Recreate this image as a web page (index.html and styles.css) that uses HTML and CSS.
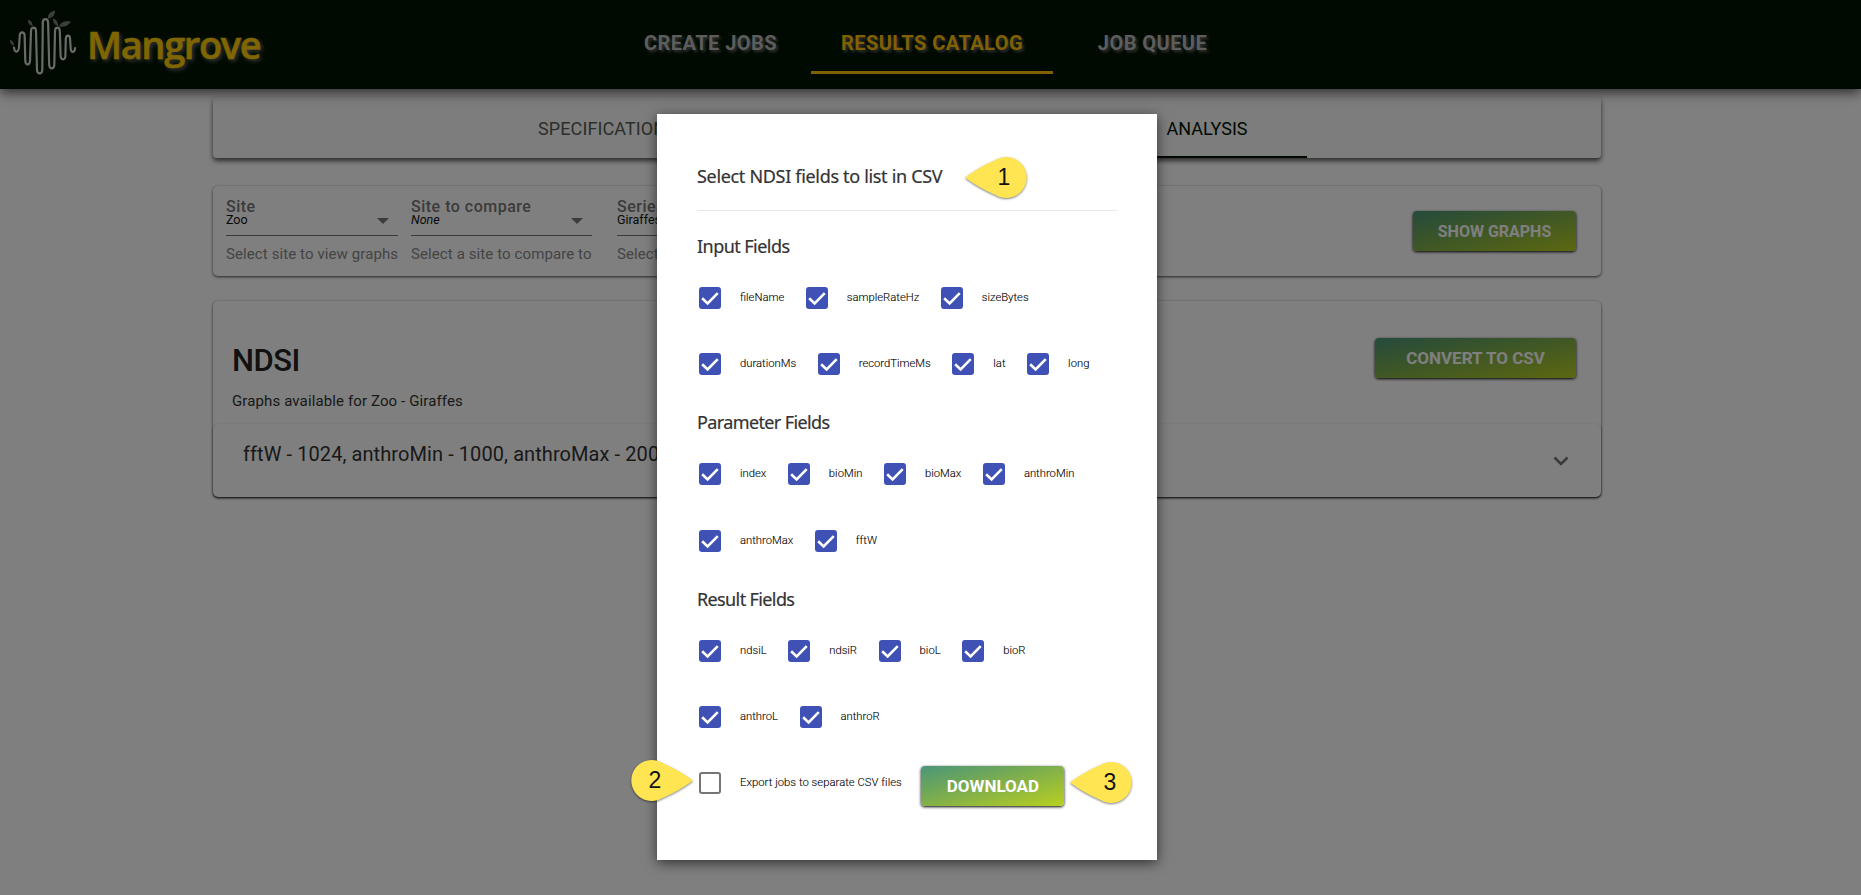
FILE: index.html
```html
<!DOCTYPE html>
<html lang="en">
<head>
<meta charset="utf-8">
<title>Mangrove</title>
<link rel="stylesheet" href="styles.css">
</head>
<body>
<svg width="0" height="0" class="defs"><defs>
  <symbol id="check" viewBox="0 0 23 23"><path d="M3.300 11.800 9 17.200 19.600 6.400" fill="none" stroke="#fff" stroke-width="2.700"/></symbol>
</defs></svg>
<div class="page">
  <header class="header">
    <div class="brand">
      <svg class="logo" viewBox="0 0 80 76">
        <path class="wave" d="M10 43.500C10.500 49 14.500 49 15 43L15.800 31C16.200 27.500 20.200 27.500 20.600 31L21.300 57C21.600 61.500 25.700 61.500 26 57L27 27C27.300 22.500 31.700 22.500 32 27L33 66C33.300 70.500 38 70.500 38.300 66L38.800 18.500C39.100 14 43.800 14 44.100 18.500L45.200 61C45.500 65.500 50 65.500 50.300 61L51 27C51.300 22.500 55.500 22.500 55.800 27L56.600 52C57 56.500 61 56.500 61.400 52L61.800 35C62.100 30.500 65.800 30.500 66.100 35L66.700 45C67 49 71 49 71 44"/>
        <g class="leaves"><path d="M44 14.500C43.500 10 46 8 51 6.500 51 11.500 48.500 14 44 14.500Z"/><path d="M28.500 22C25 21 24 19.500 24 15.500 27.500 17 28.500 18.500 28.500 22Z"/><path d="M54 22C50 20.500 49 18.500 49 14.500 53 16 54 18.500 54 22Z"/><path d="M55 22.500C57 17.500 61 16.500 67 17.500 64 22 60.500 23.500 55 22.500Z"/><path d="M10 41.800C7 41 6 39 6 35.800 9 37 10 39 10 41.800Z"/></g>
      </svg>
      <span class="brand-name">Mangrove</span>
    </div>
    <nav class="nav">
      <a class="nav-item create">CREATE JOBS</a>
      <a class="nav-item active">RESULTS CATALOG</a>
      <a class="nav-item queue">JOB QUEUE</a>
    </nav>
  </header>
  <main class="content">
    <section class="tabs">
      <a class="tab">SPECIFICATIONS</a>
      <a class="tab current">ANALYSIS</a>
    </section>
    <section class="filters card">
      <div class="field site"><label>Site</label><div class="value">Zoo<i class="arrow"></i></div><small>Select site to view graphs</small></div>
      <div class="field compare"><label>Site to compare</label><div class="value"><em>None</em><i class="arrow"></i></div><small>Select a site to compare to</small></div>
      <div class="field series"><label>Series</label><div class="value">Giraffes<i class="arrow"></i></div><small>Select series</small></div>
      <button class="btn show">SHOW GRAPHS</button>
    </section>
    <section class="card results">
      <div class="results-head">
        <div><h1>NDSI</h1><p>Graphs available for Zoo - Giraffes</p></div>
        <button class="btn convert">CONVERT TO CSV</button>
      </div>
      <div class="panel"><span>fftW - 1024, anthroMin - 1000, anthroMax - 2000</span>
        <svg class="chevron" viewBox="0 0 16 11"><path d="M1.500 1.500 8 8l6.500-6.500" fill="none" stroke="#757575" stroke-width="2.600"/></svg>
      </div>
    </section>
  </main>
</div>
<div class="overlay">
  <div class="modal">
    <h2 class="title">Select NDSI fields to list in CSV</h2>
    <h3 class="first">Input Fields</h3>
    <div class="row"><label><svg class="box"><use href="#check"/></svg><span>fileName</span></label><label><svg class="box"><use href="#check"/></svg><span>sampleRateHz</span></label><label><svg class="box"><use href="#check"/></svg><span>sizeBytes</span></label></div>
    <div class="row"><label><svg class="box"><use href="#check"/></svg><span>durationMs</span></label><label><svg class="box"><use href="#check"/></svg><span>recordTimeMs</span></label><label><svg class="box"><use href="#check"/></svg><span>lat</span></label><label><svg class="box"><use href="#check"/></svg><span>long</span></label></div>
    <h3>Parameter Fields</h3>
    <div class="row"><label><svg class="box"><use href="#check"/></svg><span>index</span></label><label><svg class="box"><use href="#check"/></svg><span>bioMin</span></label><label><svg class="box"><use href="#check"/></svg><span>bioMax</span></label><label><svg class="box"><use href="#check"/></svg><span>anthroMin</span></label></div>
    <div class="row second"><label><svg class="box"><use href="#check"/></svg><span>anthroMax</span></label><label><svg class="box"><use href="#check"/></svg><span>fftW</span></label></div>
    <h3>Result Fields</h3>
    <div class="row"><label><svg class="box"><use href="#check"/></svg><span>ndsiL</span></label><label><svg class="box"><use href="#check"/></svg><span>ndsiR</span></label><label><svg class="box"><use href="#check"/></svg><span>bioL</span></label><label><svg class="box"><use href="#check"/></svg><span>bioR</span></label></div>
    <div class="row"><label><svg class="box"><use href="#check"/></svg><span>anthroL</span></label><label><svg class="box"><use href="#check"/></svg><span>anthroR</span></label></div>
    <div class="row export"><label><svg class="box empty"></svg><span>Export jobs to separate CSV files</span></label><button class="btn download">DOWNLOAD</button></div>
  </div>
</div>
<div class="pin pin-1"><svg viewBox="0 0 62 41"><path d="M0 20.500Q14 10 31 2.700A20.500 20.500 0 1 1 31 38.300Q14 31 0 20.500Z" fill="#ffe552"/></svg><b>1</b></div>
<div class="pin pin-2"><svg viewBox="0 0 62 41"><path d="M62 20.500Q48 10 31 2.700A20.500 20.500 0 1 0 31 38.300Q48 31 62 20.500Z" fill="#ffe552"/></svg><b>2</b></div>
<div class="pin pin-3"><svg viewBox="0 0 62 41"><path d="M0 20.500Q14 10 31 2.700A20.500 20.500 0 1 1 31 38.300Q14 31 0 20.500Z" fill="#ffe552"/></svg><b>3</b></div>
</body>
</html>
```
FILE: styles.css
```css
* { box-sizing: border-box; }
body { margin: 0; font-family: Roboto, sans-serif; overflow: hidden; }
.defs { position: absolute; }
.page { height: 895px; background: #fff; }
.header { position: relative; z-index: 1; display: flex; height: 89px; background: #001400; box-shadow: 0 3px 12px rgba(0,0,0,.7); }
.brand { display: flex; width: 610px; }
.logo { width: 80px; height: 76px; margin: 4px 0 0 4px; }
.wave { fill: none; stroke: #d4d4d4; stroke-width: 2.2; stroke-linecap: round; }
.leaves { fill: #767f76; }
.brand-name { margin-left: 3px; font: 600 38px/88px "Open Sans", sans-serif; letter-spacing: -1.35px; color: #ffcc00; -webkit-text-stroke: .5px #ffcc00; text-shadow: 2px 2px 4px #777; }
.nav { display: flex; height: 74px; }
.nav-item { display: flex; justify-content: center; font-size: 20px; font-weight: 700; letter-spacing: .45px; line-height: 24px; padding-top: 31px; color: #bbb; text-shadow: 2px 2px 3px #666; white-space: nowrap; }
.create { width: 201px; }
.active { width: 242px; color: #ffc107; border-bottom: 3px solid #ffc107; }
.queue { width: 199px; }
.content { width: 1388px; margin-left: 213px; padding-top: 8px; }
.tabs { display: flex; justify-content: flex-end; height: 61px; padding-right: 294px; background: #fafafa; border-radius: 4px; box-shadow: 0 3px 5px rgba(0,0,0,.65); }
.tab { width: 200px; font-size: 18px; line-height: 63px; color: #555f55; }
.tab:first-child { width: 569px; letter-spacing: .1px; }
.current { color: #001400; text-align: center; border-bottom: 2px solid #001400; }
.card { background: #fff; border-radius: 5px; box-shadow: 0 1px 3px rgba(0,0,0,.7); }
.filters { display: flex; height: 90px; margin-top: 28px; padding: 0 24px 0 13px; }
.field { color: #777; padding-top: 12px; }
.field label { display: block; font-size: 16px; font-weight: 500; line-height: 18px; letter-spacing: .5px; }
.value { display: flex; justify-content: space-between; height: 23px; border-bottom: 1px solid #777; font-size: 12.500px; line-height: 14px; color: #111; margin-top: -3px; }
.field small { display: block; margin-top: 8px; font-size: 15px; line-height: 20px; color: #888; letter-spacing: .1px; white-space: nowrap; }
.site { width: 172px; margin-right: 13px; }
.compare { width: 181px; margin-right: 25px; }
.series { width: 170px; }
.arrow { margin: 5px 9px 0 0; width: 12px; height: 6px; background: #777; clip-path: polygon(0 0, 100% 0, 50% 100%); }
.btn { border: 0; border-radius: 4px; padding: 0; height: 41px; font: 700 16px/41px Roboto, sans-serif; color: #fff; background: linear-gradient(to bottom right, #4a9678, #82b04a 50%, #b8d020); box-shadow: 0 1px 3px #000; }
.show { width: 163px; height: 40px; margin: 25px 1px 0 auto; line-height: 37px; }
.results { height: 196px; margin-top: 25px; }
.results-head { display: flex; justify-content: space-between; height: 123px; padding: 0 25px 0 19px; }
.results h1 { margin: 42px 0 0; font-size: 31px; line-height: 36px; font-weight: 500; letter-spacing: -.5px; color: #222; }
.results p { margin: 12px 0 0; font-size: 15px; line-height: 20px; color: #333; letter-spacing: .12px; }
.convert { width: 201px; height: 40px; margin-top: 37px; font-size: 17px; line-height: 37px; }
.panel { display: flex; justify-content: space-between; height: 73px; padding: 0 32px 0 30px; border-radius: 5px; box-shadow: 0 1px 2px rgba(0,0,0,.6); font-size: 20px; letter-spacing: .08px; line-height: 60px; color: #333; }
.chevron { width: 16px; height: 11px; margin-top: 32px; }
.overlay { position: absolute; inset: 0; z-index: 5; background: rgba(0,0,0,.5); }
.modal { width: 500px; height: 746px; margin: 114px 0 0 657px; padding: 40px; background: #fff; box-shadow: 0 3px 12px rgba(0,0,0,.6); }
.modal h2, .modal h3 { margin: 0; font: 400 18px/25px "Noto Sans", "Open Sans", sans-serif; color: #333; -webkit-text-stroke: .2px #333; }
.modal .title { height: 57px; padding-top: 10px; border-bottom: 1px solid #e8e8e8; letter-spacing: -.32px; }
.modal h3 { height: 44px; padding-top: 13px; letter-spacing: -.62px; }
.modal .first { height: 54px; padding-top: 23px; letter-spacing: -.55px; }
.row { display: flex; height: 66px; }
.second { height: 67px; padding-top: 1px; }
.row label { display: flex; height: 66px; margin-right: 19.600px; padding-left: 2px; font-size: 11.250px; font-weight: 300; line-height: 65px; color: #000; -webkit-text-stroke: .1px #000; white-space: nowrap; }
.box { width: 22px; height: 22px; margin: 22px 19px 0 0; border-radius: 3px; background: #3f51b5; }
.empty { background: #fff; border: 2px solid #757575; }
.export label { letter-spacing: .04px; }
.download { width: 143px; height: 40px; margin-top: 16px; font-size: 17px; line-height: 38px; }
.pin { position: absolute; z-index: 10; width: 62px; height: 41px; }
.pin svg { display: block; width: 62px; height: 41px; overflow: visible; filter: drop-shadow(0 1px 1px rgba(0,0,0,.5)); }
.pin b { position: absolute; top: 0; left: 23px; width: 34px; text-align: center; font: 400 23px/40px "Liberation Sans", sans-serif; color: #111; }
.pin-1 { left: 965px; top: 157px; }
.pin-1 b { left: 22px; }
.pin-2 { left: 631px; top: 760px; }
.pin-2 b { left: 7px; }
.pin-3 { left: 1070px; top: 762px; }
```
